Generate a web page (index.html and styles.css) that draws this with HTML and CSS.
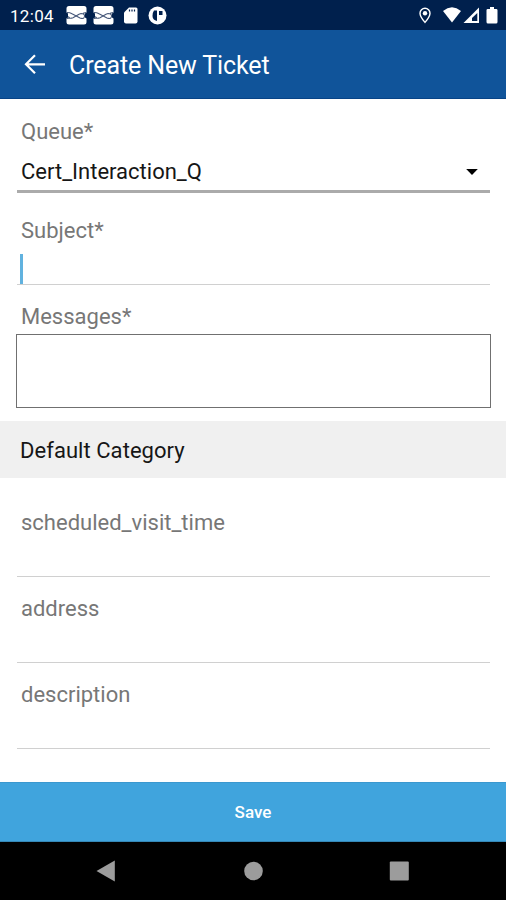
FILE: index.html
```html
<!DOCTYPE html>
<html lang="en">
<head>
<meta charset="utf-8">
<title>Create New Ticket</title>
<link rel="stylesheet" href="styles.css">
</head>
<body>
<div class="status">
  <span class="clock">12:04</span>
  <svg class="status-icons" width="440" height="30" viewBox="66 0 440 30" fill="#fff">
    <g id="loop">
      <path d="M69 6h15q2.500 0 2.500 2.500v4l-1.500 1v4l1.500 1v3.500q0 2.500-2.500 2.500h-15q-2.500 0-2.500-2.500v-3.500l1.500-1v-4l-1.500-1v-4q0-2.500 2.500-2.500z"/>
      <path d="M67 12.500q3 0 5 1.200l8 4.300q4 1.500 4.500-1.500t-3.500-3l-2 .7-6 3.600q-4 1.500-4.500-1.500M86 12.500l-3 .7M67 18.500l3-.5" fill="none" stroke="#46587a" stroke-width="1.100"/>
    </g>
    <use href="#loop" x="27"/>
    <path d="M129 7.500h7q1.500 0 1.500 1.500v12.500q0 2-2 2h-9.500q-2 0-2-2v-9z"/>
    <path d="M129.500 9.500v2M132 9.500v2M134.500 9.500v2" stroke="#00204d" stroke-width="1.200"/>
    <circle cx="157.500" cy="15.500" r="9"/>
    <path d="M154 10.500h3v10.500q-4.500-1-4.500-5 0-3.500 1.500-5.500zM159 11h3.500v4h-3.500z" fill="#00204d"/>
    <path d="M425 8.200a5 5 0 0 1 5 5c0 3.400-5 9.200-5 9.200s-5-5.800-5-9.200a5 5 0 0 1 5-5z" fill="none" stroke="#fff" stroke-width="1.400"/>
    <circle cx="425" cy="13.300" r="2.200"/>
    <path d="M443 11q9-7.300 18 0l-9 11.500z"/>
    <path d="M479 7.500v15.500h-15.500z"/>
    <path d="M477.300 13v8h-5.300v-3z" fill="#00204d"/>
    <path d="M490 7h4v2h2.200q1.300 0 1.300 1.300v11.700q0 1.500-1.500 1.500h-8q-1.500 0-1.500-1.500v-11.700q0-1.300 1.300-1.300h2.200z"/>
  </svg>
</div>
<header class="appbar">
  <svg class="back" width="22" height="22" viewBox="0 0 22 22" fill="none" stroke="#fff" stroke-width="2.200"><path d="M21 10.300H2.500M11 1.300L2 10.300l9 9"/></svg>
  <h1>Create New Ticket</h1>
</header>
<main>
  <section class="fields first">
    <div class="field queue">
      <label>Queue*</label>
      <div class="select"><span>Cert_Interaction_Q</span><svg width="12" height="7" viewBox="0 0 12 7"><path d="M.2 0h11.600L6 6z"/></svg></div>
    </div>
    <div class="field subject">
      <label>Subject*</label>
      <div class="input"><span class="caret"></span></div>
    </div>
    <div class="messages">
      <label>Messages*</label>
      <div class="textarea"></div>
    </div>
  </section>
  <h2>Default Category</h2>
  <section class="fields custom">
    <div class="field"><label>scheduled_visit_time</label></div>
    <div class="field"><label>address</label></div>
    <div class="field"><label>description</label></div>
  </section>
</main>
<button class="save">Save</button>
<nav>
  <svg width="506" height="58" viewBox="0 1 506 58" fill="#9c9c9c"><path d="M96.500 30L114.800 19.500v21z"/><circle cx="253.500" cy="30" r="9.300"/><rect x="389.800" y="20.500" width="19" height="19" rx="1"/></svg>
</nav>
</body>
</html>
```
FILE: styles.css
```css
* { box-sizing: border-box; }
body {
  margin: 0;
  width: 506px;
  height: 900px;
  display: flex;
  flex-direction: column;
  overflow: hidden;
  background: #fff;
  font: 22px/26px Roboto, sans-serif;
  color: #161616;
}
svg { display: block; flex: none; }
.status {
  height: 30px;
  display: flex;
  align-items: center;
  background: #00204d;
  color: #fff;
}
.clock {
  width: 66px;
  padding: 1px 0 0 10px;
  font-size: 17px;
  letter-spacing: 0.3px;
}
.appbar {
  height: 69px;
  display: flex;
  align-items: center;
  padding: 2px 0 0 24px;
  background: #10549a;
  border-bottom: 1px solid #084487;
  color: #fff;
}
h1 {
  margin: 2px 0 0 23px;
  font-size: 25px;
  font-weight: 400;
  line-height: 30px;
  letter-spacing: -0.12px;
}
main { height: 683px; }
.fields { padding: 0 16px; }
.first { height: 322px; padding-top: 20px; }
label {
  display: block;
  padding-left: 4px;
  color: #777;
}
.field { margin-left: 1px; border-bottom: 1px solid #d0d0d0; }
.queue { height: 74px; border-bottom: 3px solid #ababab; }
.select {
  display: flex;
  align-items: center;
  justify-content: space-between;
  margin-top: 14px;
  padding: 0 12px 0 4px;
}
.subject { height: 92px; padding-top: 25px; }
.input { padding: 10px 0 0 3px; }
.caret { display: block; width: 3px; height: 30px; background: #61b2df; }
.messages { padding-top: 19px; }
.messages label { padding-left: 5px; }
.textarea { height: 74px; width: 475px; margin-top: 4px; border: 1px solid #707070; }
h2 {
  height: 57px;
  margin: 0;
  padding: 17px 20px 14px;
  background: #f0f0f0;
  font-size: 22px;
  font-weight: 400;
  line-height: 26px;
  letter-spacing: 0.05px;
}
.custom .field { height: 86px; padding-top: 19px; }
.custom .field:first-child { height: 99px; padding-top: 32px; }
.save {
  height: 60px;
  border: 0;
  border-top: 1px solid #3b98cf;
  border-bottom: 1px solid #3588b7;
  padding: 0 0 1px;
  background: #40a4dd;
  color: #fff;
  font: 500 17px/22px Roboto, sans-serif;
}
nav { height: 58px; background: #000; }
```
